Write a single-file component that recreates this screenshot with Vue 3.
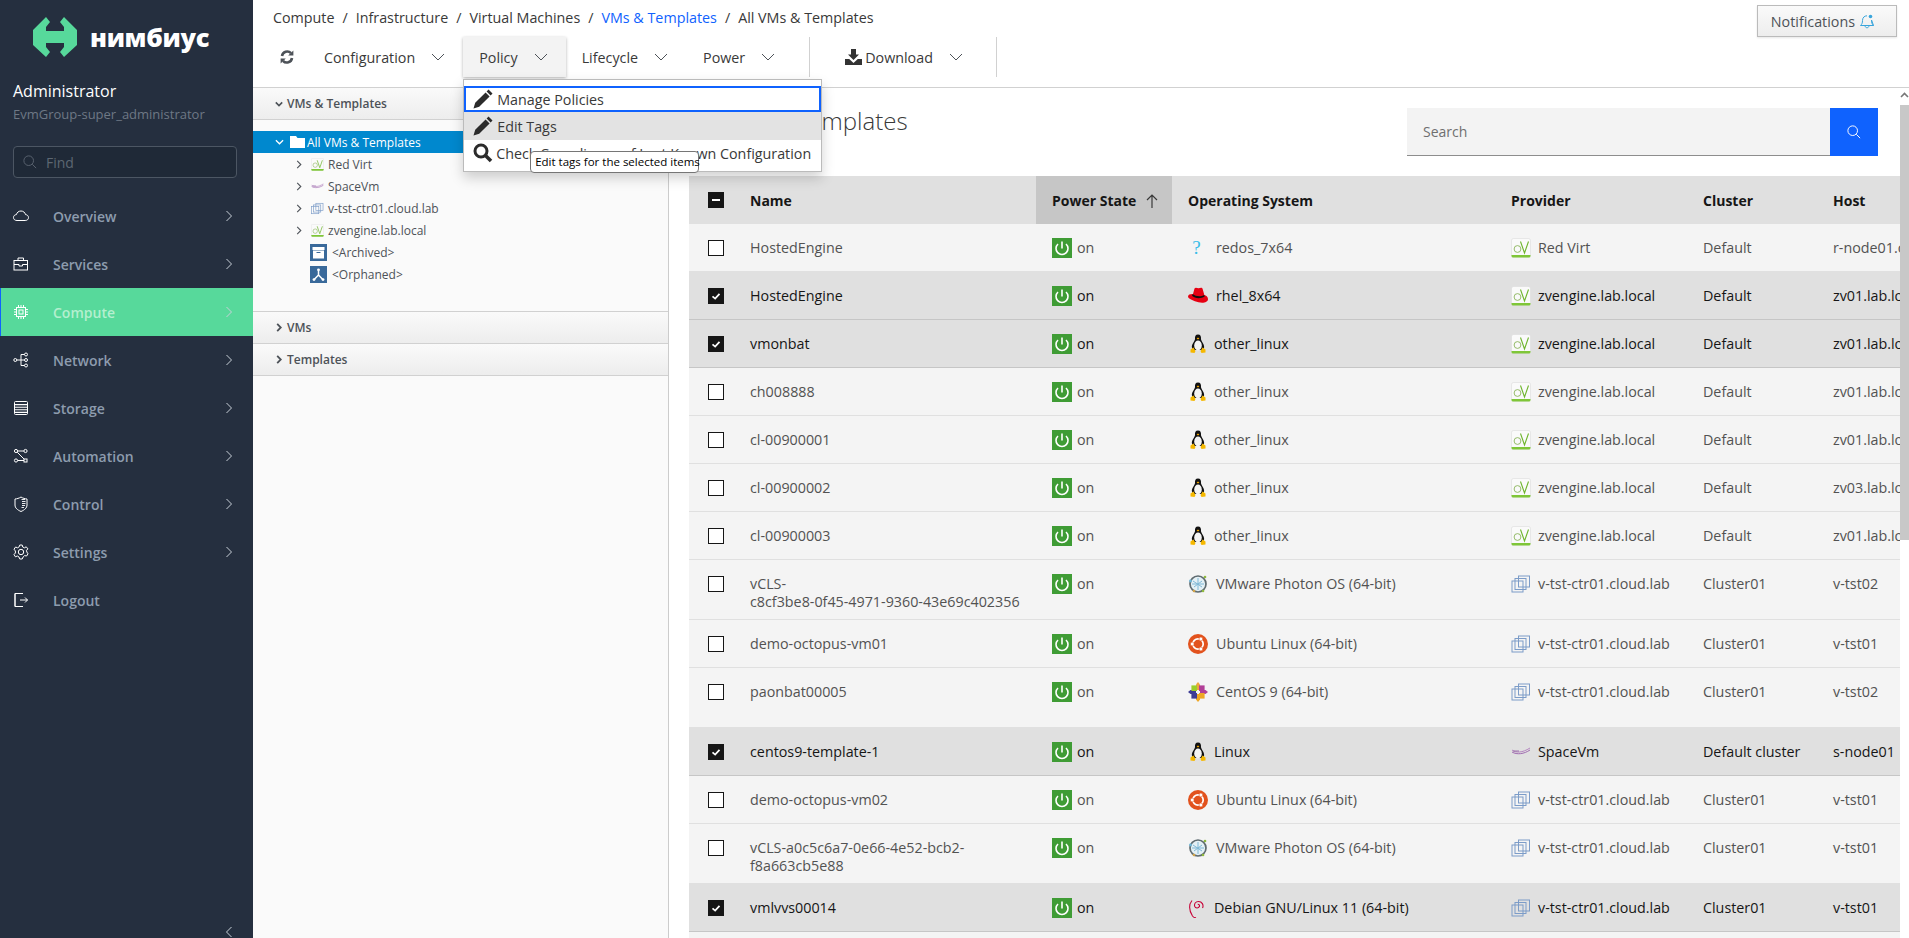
<template>
  <div class="app">
    <aside class="sidebar">
      <div class="logo">
        <svg class="logo-mark" viewBox="33 17 44 40"><path d="M46 17 L50 22 L46 27 V31 H64 V27 L60 22 L64 17 L77 30 V45 L64 57 L60 52 L64 47 V43 H46 V47 L50 52 L46 57 L33 45 V30 Z" fill="#57d99b"/></svg>
        <span class="logo-text">нимбиус</span>
      </div>
      <div class="user">
        <div class="user-name">Administrator</div>
        <div class="user-group">EvmGroup-super_administrator</div>
      </div>
      <div class="find">
        <svg class="find-icon" viewBox="0 0 16 16" fill="none" stroke="#59636f" stroke-width="1.1"><circle cx="6.5" cy="6.5" r="5.5"/><path d="M10.6 10.6 L15 15"/></svg>
        <span>Find</span>
      </div>
      <nav class="nav">
        <div v-for="item in navItems" :key="item.label" class="nav-item" :class="{ active: item.active }">
          <svg class="nav-icon" viewBox="0 0 16 16" fill="none" stroke="#fff" stroke-width="1" v-html="navIcons[item.icon]"></svg>
          <span class="nav-label">{{ item.label }}</span>
          <svg v-if="item.arrow" class="nav-arrow" viewBox="0 0 6 12" fill="none" stroke="currentColor" stroke-width="1"><path d="M0.5 1 L5.5 6 L0.5 11"/></svg>
        </div>
      </nav>
      <div class="collapse-row">
        <svg class="nav-arrow" viewBox="0 0 6 12" fill="none" stroke="#c8d0d8" stroke-width="1"><path d="M5.5 1 L0.5 6 L5.5 11"/></svg>
      </div>
    </aside>

    <main class="main">
      <div class="topbar">
        <div class="crumbs">
          <template v-for="(c, i) in crumbs" :key="c.text">
            <span v-if="i" class="crumb-sep">/</span>
            <span :class="{ 'crumb-link': c.link }">{{ c.text }}</span>
          </template>
        </div>
        <button class="notify">
          Notifications
          <svg class="bell" viewBox="0 0 16 16" fill="none" stroke="#39a5dc" stroke-width="1"><path d="M1.5 12.5 C3 11 3.5 10 3.5 7.5 C3.5 4.5 5.5 2.8 8 2.8 M12.5 7 C12.6 10 13 11 14.5 12.5 Z M1.5 12.5 H14.5 M6 12.5 C6 15.5 10 15.5 10 12.5"/><circle cx="11.5" cy="3.5" r="1.8" fill="#39a5dc" stroke="none"/></svg>
        </button>
      </div>

      <div class="toolbar">
        <svg class="refresh" viewBox="0 0 14 14" fill="none" stroke="#4d5258" stroke-width="2.6"><path d="M2 6 A5.2 5.2 0 0 1 11 3.2"/><path d="M12 8 A5.2 5.2 0 0 1 3 10.8"/><path d="M13.4 0.4 V5.6 H8.2 Z" fill="#4d5258" stroke="none"/><path d="M0.6 13.6 V8.4 H5.8 Z" fill="#4d5258" stroke="none"/></svg>
        <div class="tool-btn">
          Configuration
          <svg class="chev" viewBox="0 0 14 8" fill="none" stroke="#4d5258" stroke-width="1"><path d="M1 1 L7 7 L13 1"/></svg>
        </div>
        <div class="tool-wrap">
          <div class="tool-btn open">
            Policy
            <svg class="chev" viewBox="0 0 14 8" fill="none" stroke="#4d5258" stroke-width="1"><path d="M1 1 L7 7 L13 1"/></svg>
          </div>
          <div class="dropdown">
            <div class="dd-item focused">
              <svg class="dd-icon" viewBox="0 0 20 20" v-html="pencil"></svg>
              <span>Manage Policies</span>
            </div>
            <div class="dd-item hovered">
              <svg class="dd-icon" viewBox="0 0 20 20" v-html="pencil"></svg>
              <span>Edit Tags</span>
            </div>
            <div class="dd-item last">
              <svg class="dd-icon search-ic" viewBox="0 0 20 20" fill="none" stroke="#2b2b2b" stroke-width="3"><circle cx="8" cy="8" r="6"/><path d="M12.5 12.5 L18 18" stroke-width="3.6"/></svg>
              <span>Check Compliance of Last Known Configuration</span>
            </div>
            <div class="tooltip">Edit tags for the selected items</div>
          </div>
        </div>
        <div class="tool-btn">
          Lifecycle
          <svg class="chev" viewBox="0 0 14 8" fill="none" stroke="#4d5258" stroke-width="1"><path d="M1 1 L7 7 L13 1"/></svg>
        </div>
        <div class="tool-btn power-btn">
          Power
          <svg class="chev" viewBox="0 0 14 8" fill="none" stroke="#4d5258" stroke-width="1"><path d="M1 1 L7 7 L13 1"/></svg>
        </div>
        <div class="tool-sep"></div>
        <div class="download">
          <svg class="dl-icon" viewBox="0 0 17 16" fill="#333"><path d="M6 0 H11 V5.5 H14 L8.5 11 L3 5.5 H6 Z"/><path d="M0 10 H4.2 L8.5 14 L12.8 10 H17 V16 H0 Z"/></svg>
          <span class="dl-text">Download</span>
          <svg class="chev" viewBox="0 0 14 8" fill="none" stroke="#4d5258" stroke-width="1"><path d="M1 1 L7 7 L13 1"/></svg>
        </div>
        <div class="tool-sep"></div>
      </div>

      <div class="body">
        <section class="tree-panel">
          <div class="acc-head">
            <svg class="acc-chev" viewBox="0 0 10 6" fill="none" stroke="#4d5258" stroke-width="2"><path d="M1 1 L5 5 L9 1"/></svg>
            VMs &amp; Templates
          </div>
          <div class="tree">
            <div class="tree-row selected">
              <svg class="tree-chev-open" viewBox="0 0 10 6" fill="none" stroke="#fff" stroke-width="1.4"><path d="M1 1 L5 5 L9 1"/></svg>
              <svg class="folder" viewBox="0 0 15 12" fill="#fff"><path d="M0 0 H6 L7.5 2 H15 V12 H0 Z"/></svg>
              <span>All VMs &amp; Templates</span>
            </div>
            <div v-for="node in treeNodes" :key="node.label" class="tree-row child">
              <svg class="tree-chev" viewBox="0 0 6 10" fill="none" stroke="#4d5258" stroke-width="1.2"><path d="M1 1 L5 5 L1 9"/></svg>
              <svg class="tree-icon" viewBox="0 0 20 20" v-html="logos[node.icon]"></svg>
              <span>{{ node.label }}</span>
            </div>
            <div class="tree-row special">
              <svg class="special-icon" viewBox="0 0 17 17"><rect width="17" height="17" fill="#39699a"/><rect x="2.5" y="3" width="12" height="3" fill="#fff"/><rect x="3" y="6.5" width="11" height="8" fill="#fff"/><rect x="6.5" y="8" width="4" height="1" fill="#39699a"/></svg>
              <span>&lt;Archived&gt;</span>
            </div>
            <div class="tree-row special">
              <svg class="special-icon" viewBox="0 0 17 17"><rect width="17" height="17" fill="#39699a"/><path d="M8.5 4 V9 L4.2 13.5 M8.5 9 L12.8 13.5" fill="none" stroke="#fff" stroke-width="1.5"/><circle cx="8.5" cy="3.8" r="1.4" fill="#fff"/><circle cx="4" cy="13.6" r="1.4" fill="#fff"/><circle cx="13" cy="13.6" r="1.4" fill="#fff"/></svg>
              <span>&lt;Orphaned&gt;</span>
            </div>
          </div>
          <div class="acc-head closed">
            <svg class="acc-chev-r" viewBox="0 0 6 10" fill="none" stroke="#4d5258" stroke-width="2"><path d="M1 1 L5 5 L1 9"/></svg>
            VMs
          </div>
          <div class="acc-head closed">
            <svg class="acc-chev-r" viewBox="0 0 6 10" fill="none" stroke="#4d5258" stroke-width="2"><path d="M1 1 L5 5 L1 9"/></svg>
            Templates
          </div>
        </section>

        <section class="content">
          <div class="content-head">
            <h1 class="title">All VMs &amp; Templates</h1>
            <div class="search">
              <div class="search-input">Search</div>
              <button class="search-btn">
                <svg viewBox="0 0 16 16" fill="none" stroke="#fff" stroke-width="1.1"><circle cx="6.5" cy="6.5" r="5.5"/><path d="M10.6 10.6 L15 15"/></svg>
              </button>
            </div>
          </div>
          <table class="grid">
            <colgroup>
              <col style="width: 47px" />
              <col style="width: 300px" />
              <col style="width: 136px" />
              <col style="width: 325px" />
              <col style="width: 192px" />
              <col style="width: 130px" />
              <col />
            </colgroup>
            <thead>
              <tr>
                <th class="check-cell"><span class="box filled"><i class="minus"></i></span></th>
                <th>Name</th>
                <th class="sorted wide-pad">Power State<svg class="sort-arrow" viewBox="0 0 12 14" fill="none" stroke="#393939" stroke-width="1.2"><path d="M6 14 V1 M1 6 L6 1 L11 6"/></svg></th>
                <th class="wide-pad">Operating System</th>
                <th>Provider</th>
                <th>Cluster</th>
                <th>Host</th>
              </tr>
            </thead>
            <tbody>
              <tr v-for="(row, i) in rows" :key="i" :class="{ sel: row.sel, tall: row.tall }">
                <td class="check-cell">
                  <span class="box" :class="{ filled: row.sel }">
                    <svg v-if="row.sel" viewBox="0 0 16 16" fill="none" stroke="#fff" stroke-width="2"><path d="M4 8.5 L7 11 L12 5.5"/></svg>
                  </span>
                </td>
                <td class="name-cell">{{ row.name }}</td>
                <td class="wide-pad">
                  <span class="with-icon">
                    <svg class="power" viewBox="0 0 20 20"><rect width="20" height="20" fill="#3f9c35"/><path d="M6 6 A6 6 0 1 0 14 6" fill="none" stroke="#fff" stroke-width="1.6"/><path d="M10 3.5 V10.5" stroke="#fff" stroke-width="1.6"/></svg>
                    <span>on</span>
                  </span>
                </td>
                <td class="wide-pad">
                  <span class="with-icon os">
                    <svg class="os-icon" viewBox="0 0 20 20" v-html="logos[row.osIcon]"></svg>
                    <span :class="{ nudge: row.osIcon === 'tux' || row.osIcon === 'debian' }">{{ row.os }}</span>
                  </span>
                </td>
                <td>
                  <span class="with-icon prov">
                    <svg class="os-icon" viewBox="0 0 20 20" v-html="logos[row.provIcon]"></svg>
                    <span>{{ row.provider }}</span>
                  </span>
                </td>
                <td>{{ row.cluster }}</td>
                <td class="host-cell">{{ row.host }}</td>
              </tr>
            </tbody>
          </table>
        </section>

        <div class="scrollbar">
          <svg class="scroll-up" viewBox="0 0 9 6" fill="none" stroke="#777" stroke-width="1.6"><path d="M1 5 L4.5 1.5 L8 5"/></svg>
          <div class="scroll-thumb"></div>
        </div>
      </div>
    </main>
  </div>
</template>

<script setup>
const navItems = [
  { label: 'Overview', icon: 'cloud', arrow: true },
  { label: 'Services', icon: 'case', arrow: true },
  { label: 'Compute', icon: 'chip', arrow: true, active: true },
  { label: 'Network', icon: 'net', arrow: true },
  { label: 'Storage', icon: 'storage', arrow: true },
  { label: 'Automation', icon: 'auto', arrow: true },
  { label: 'Control', icon: 'shield', arrow: true },
  { label: 'Settings', icon: 'gear', arrow: true },
  { label: 'Logout', icon: 'logout', arrow: false },
]

const navIcons = {
  cloud: '<path d="M4 12.5 C1.5 12.5 0.5 11 0.5 9.5 C0.5 7.8 1.8 6.7 3.4 6.6 C3.9 4.4 5.7 3 8 3 C10.3 3 12 4.5 12.5 6.6 C14.2 6.7 15.5 7.9 15.5 9.6 C15.5 11.2 14.3 12.5 12.2 12.5 Z"/>',
  case: '<rect x="1" y="4.5" width="13.5" height="9.5"/><path d="M5 4.5 V2 H10.5 V4.5 M1 8.5 H6 V10 H9.5 V8.5 H14.5"/>',
  chip: '<rect x="3.5" y="3.5" width="9" height="9"/><rect x="6" y="6" width="4" height="4"/><path d="M5.5 1 V3.5 M8 1 V3.5 M10.5 1 V3.5 M5.5 12.5 V15 M8 12.5 V15 M10.5 12.5 V15 M1 5.5 H3.5 M1 8 H3.5 M1 10.5 H3.5 M12.5 5.5 H15 M12.5 8 H15 M12.5 10.5 H15"/>',
  net: '<circle cx="2.3" cy="8" r="1.5"/><circle cx="13" cy="2.5" r="1.5"/><circle cx="13" cy="8" r="1.5"/><circle cx="13" cy="13.5" r="1.5"/><path d="M3.8 8 H11.5 M8 8 V2.5 H11.5 M8 8 V13.5 H11.5"/>',
  storage: '<rect x="1.5" y="1.5" width="13" height="13" rx="1"/><path d="M1.5 4.6 H14.5 M1.5 7.2 H14.5 M1.5 9.8 H14.5 M1.5 12.4 H14.5" stroke-width="1.1"/>',
  auto: '<circle cx="3" cy="3" r="1.6"/><circle cx="12.5" cy="3" r="1.6"/><circle cx="3" cy="12.5" r="1.6"/><rect x="11" y="11" width="3" height="3"/><path d="M4.6 3 H10.9 M4.2 4.2 L11.2 11.2 M4.6 12.5 H11"/>',
  shield: '<path d="M8 1 C10 2.3 12 2.8 14 3 V9 C14 12 11.5 14 8 15.5 C4.5 14 2 12 2 9 V3 C4 2.8 6 2.3 8 1 Z"/><path d="M8.5 3.5 H12 M9 5.5 H12.5 M9 7.5 H12.5 M9 9.5 H12 M8.5 11.5 H11" stroke-width="0.9"/>',
  gear: '<circle cx="8" cy="8" r="2.7"/><path d="M6.8 1 H9.2 L9.7 3 L11.5 3.8 L13.2 2.8 L14.9 4.9 L13.5 6.3 L13.8 8 L15 9.8 L13.6 12 L11.6 11.6 L10.1 13 L9.2 15 H6.8 L6 13 L4.3 12 L2.4 12.8 L1 10.6 L2.4 9 V7 L1 5.2 L2.6 3 L4.6 3.8 L6.2 2.8 Z"/>',
  logout: '<path d="M10 1.5 H2 V14.5 H10 M2 1.5 V14.5 M7 8 H14.5 M12 5.5 L14.5 8 L12 10.5"/>',
}

const crumbs = [
  { text: 'Compute' },
  { text: 'Infrastructure' },
  { text: 'Virtual Machines' },
  { text: 'VMs & Templates', link: true },
  { text: 'All VMs & Templates' },
]

const pencil = '<path fill="#2b2b2b" d="M15.5 0.5 L19.5 4.5 L17.6 6.4 L13.6 2.4 Z M12.6 3.4 L16.6 7.4 L6.2 17.8 L0.5 19.5 L2.2 13.8 Z"/>'

const logos = {
  ovirt:
    '<rect x="0.5" y="0.5" width="19" height="18.5" rx="2" fill="#fafafa" stroke="#dcdcdc" stroke-width="0.6"/><path d="M0.5 17 H19.5 V18 Q19.5 19.5 18 19.5 H2 Q0.5 19.5 0.5 18 Z" fill="#7fc638"/><circle cx="6.5" cy="11" r="3.4" fill="none" stroke="#8ab45a" stroke-width="0.9"/><path d="M9.5 3.5 L13.5 15 L17.5 3.5" fill="none" stroke="#6fb52d" stroke-width="1.1"/>',
  space:
    '<path d="M1 8 C5 11 11 11 19 6" fill="none" stroke="#b585c0" stroke-width="1"/><path d="M1 10 C6 13 13 12 19 8" fill="none" stroke="#a06cb0" stroke-width="1"/><path d="M2 9 H8" stroke="#8d5aa0" stroke-width="0.8"/>',
  vmware:
    '<g fill="none" stroke="#7c9cc8" stroke-width="1"><rect x="1" y="7" width="11" height="11"/><rect x="4" y="4.5" width="11" height="11"/><rect x="7.5" y="2" width="11" height="11"/></g>',
  unknown:
    '<text x="8.5" y="16" text-anchor="middle" font-family="Liberation Serif, serif" font-size="19" fill="#39bde8">?</text>',
  redhat:
    '<path d="M5 8 L6.5 2.5 C7.5 1 9 2 10.5 2.3 C12.5 2 14 1 14.8 3.5 L16.3 9 C18 9.5 20 10.5 20 13 C20 16.5 15 17.5 10.5 16.3 C6 15 0 13 0 10.5 C0 8.5 2.5 7.8 5 8 Z" fill="#e60012"/><path d="M4.8 8 C7.5 10.5 13 11 16.3 9 L16.7 10.5 C12.5 13 7 12.5 4 9.8 Z" fill="#111"/>',
  tux:
    '<path d="M10 0.5 C7.5 0.5 6.8 2.5 7 5 C7 7 4 9.5 3.8 13 L5 16 H15 L16.2 13 C16 9.5 13 7 13 5 C13.2 2.5 12.5 0.5 10 0.5 Z" fill="#111"/><ellipse cx="10" cy="11.5" rx="3.8" ry="5" fill="#f4f4f4"/><path d="M8.6 4.4 L10 3.6 L11.4 4.4 L10 5.6 Z" fill="#f5a800"/><path d="M2.5 15.5 L5.5 13.5 L7.5 17 L6.5 19 L2.5 18.5 Z M17.5 15.5 L14.5 13.5 L12.5 17 L13.5 19 L17.5 18.5 Z" fill="#f5b800"/>',
  ubuntu:
    '<circle cx="10" cy="10" r="10" fill="#e2521d"/><circle cx="10" cy="10" r="5.2" fill="none" stroke="#fff" stroke-width="1.7"/><circle cx="4.2" cy="10" r="1.9" fill="#fff" stroke="#e2521d" stroke-width="0.6"/><circle cx="12.9" cy="5" r="1.9" fill="#fff" stroke="#e2521d" stroke-width="0.6"/><circle cx="12.9" cy="15" r="1.9" fill="#fff" stroke="#e2521d" stroke-width="0.6"/>',
  photon:
    '<circle cx="10" cy="10" r="8" fill="#e4f0f5" stroke="#5f6b70" stroke-width="1.7"/><path d="M5 7 L14 13 M6 13 L14 7 M10 4 V16 M4 10 H16" stroke="#7fb8d6" stroke-width="1"/><circle cx="2.5" cy="7" r="1.4" fill="#6fb7d8"/><circle cx="17" cy="3" r="1.3" fill="#8fb93e"/><circle cx="15" cy="17" r="1.3" fill="#8fb93e"/><circle cx="6" cy="17" r="1.3" fill="#d0a34a"/>',
  centos:
    '<path d="M10 0 L12 2.5 V8 H8 V2.5 Z" fill="#eea53c"/><path d="M20 10 L17.5 12 H12 V8 H17.5 Z" fill="#b13f97"/><path d="M10 20 L8 17.5 V12 H12 V17.5 Z" fill="#efa724"/><path d="M0 10 L2.5 8 H8 V12 H2.5 Z" fill="#3d3c95"/><rect x="3.4" y="3.4" width="5.6" height="5.6" fill="#9ccd2a"/><rect x="11" y="3.4" width="5.6" height="5.6" fill="#b13f97"/><rect x="11" y="11" width="5.6" height="5.6" fill="#efa724"/><rect x="3.4" y="11" width="5.6" height="5.6" fill="#3d3c95"/>',
  debian:
    '<path d="M14.5 10 C16 7 14 3.5 10.5 3.5 C7.5 3.5 6 6 6.7 8.4 C7.4 10.4 10.5 10.5 11.4 8.6 C11.9 7.4 11 6 9.7 6.2 M4 2.5 C1 6 0.5 12 4.5 18 C5.5 19.2 7 20 8 19.5" fill="none" stroke="#c70036" stroke-width="1.1"/>',
}

const treeNodes = [
  { label: 'Red Virt', icon: 'ovirt' },
  { label: 'SpaceVm', icon: 'space' },
  { label: 'v-tst-ctr01.cloud.lab', icon: 'vmware' },
  { label: 'zvengine.lab.local', icon: 'ovirt' },
]

const zv = { provider: 'zvengine.lab.local', provIcon: 'ovirt', cluster: 'Default' }
const vt = { provider: 'v-tst-ctr01.cloud.lab', provIcon: 'vmware', cluster: 'Cluster01' }
const photon = { os: 'VMware Photon OS (64-bit)', osIcon: 'photon' }
const ubuntu = { os: 'Ubuntu Linux (64-bit)', osIcon: 'ubuntu' }
const linux = { os: 'other_linux', osIcon: 'tux' }

const rows = [
  { name: 'HostedEngine', os: 'redos_7x64', osIcon: 'unknown', provider: 'Red Virt', provIcon: 'ovirt', cluster: 'Default', host: 'r-node01.cloud.lab' },
  { name: 'HostedEngine', sel: true, os: 'rhel_8x64', osIcon: 'redhat', ...zv, host: 'zv01.lab.local' },
  { name: 'vmonbat', sel: true, ...linux, ...zv, host: 'zv01.lab.local' },
  { name: 'ch008888', ...linux, ...zv, host: 'zv01.lab.local' },
  { name: 'cl-00900001', ...linux, ...zv, host: 'zv01.lab.local' },
  { name: 'cl-00900002', ...linux, ...zv, host: 'zv03.lab.local' },
  { name: 'cl-00900003', ...linux, ...zv, host: 'zv01.lab.local' },
  { name: 'vCLS-\nc8cf3be8-0f45-4971-9360-43e69c402356', tall: true, ...photon, ...vt, host: 'v-tst02' },
  { name: 'demo-octopus-vm01', ...ubuntu, ...vt, host: 'v-tst01' },
  { name: 'paonbat00005', tall: true, os: 'CentOS 9 (64-bit)', osIcon: 'centos', ...vt, host: 'v-tst02' },
  { name: 'centos9-template-1', sel: true, os: 'Linux', osIcon: 'tux', provider: 'SpaceVm', provIcon: 'space', cluster: 'Default cluster', host: 's-node01' },
  { name: 'demo-octopus-vm02', ...ubuntu, ...vt, host: 'v-tst01' },
  { name: 'vCLS-a0c5c6a7-0e66-4e52-bcb2-\nf8a663cb5e88', tall: true, ...photon, ...vt, host: 'v-tst01' },
  { name: 'vmlvvs00014', sel: true, os: 'Debian GNU/Linux 11 (64-bit)', osIcon: 'debian', ...vt, host: 'v-tst01' },
  { name: 'vmlvvs00015', ...linux, ...vt, host: 'v-tst01' },
]
</script>

<style>
html,
body {
  margin: 0;
  height: 100%;
  overflow: hidden;
  background: #fff;
}
</style>

<style scoped>
.app {
  display: flex;
  height: 938px;
  overflow: hidden;
  font-family: 'Open Sans', 'Noto Sans', sans-serif;
  font-size: 14px;
  color: #393939;
}

/* sidebar */
.sidebar {
  width: 253px;
  flex: none;
  display: flex;
  flex-direction: column;
  background: #252f3f;
  color: #fff;
}

.logo {
  display: flex;
  align-items: center;
  height: 40px;
  margin-top: 17px;
  padding-left: 33px;
}

.logo-mark {
  width: 44px;
  height: 40px;
}

.logo-text {
  margin-left: 13px;
  font-family: 'Open Sans', sans-serif;
  font-weight: 800;
  font-size: 25.5px;
  line-height: 40px;
  letter-spacing: -0.3px;
}

.user {
  padding: 23px 13px 0;
}

.user-name {
  font-size: 16px;
  line-height: 22px;
}

.user-group {
  margin-top: 3px;
  font-size: 13px;
  line-height: 18px;
  color: #6e7885;
}

.find {
  display: flex;
  align-items: center;
  gap: 9px;
  height: 30px;
  margin: 23px 16px 0 13px;
  padding-left: 9px;
  border: 1px solid #4c5663;
  border-radius: 4px;
  background: #1f2937;
  color: #5d6772;
}

.find-icon {
  width: 14px;
  height: 14px;
}

.nav {
  margin-top: 14px;
}

.nav-item {
  display: flex;
  align-items: center;
  height: 48px;
  padding-left: 13px;
  color: #8d9cae;
  font-weight: 600;
}

.nav-item.active {
  background: #57d99b;
  color: #b4efcf;
  box-shadow: inset 1px 0 0 #0f62fe;
}

.nav-icon {
  width: 16px;
  height: 16px;
  flex: none;
}

.nav-label {
  margin-left: 24px;
  flex: 1;
}

.nav-arrow {
  width: 6px;
  height: 12px;
  margin-right: 21px;
  color: #c8d0d8;
}

.collapse-row {
  margin-top: auto;
  height: 12px;
  display: flex;
  justify-content: flex-end;
}

/* top */
.main {
  flex: 1;
  min-width: 0;
  display: flex;
  flex-direction: column;
  font-size: 14.3px;
}

.topbar {
  display: flex;
  justify-content: space-between;
  height: 37px;
  padding-left: 20px;
}

.crumbs {
  display: flex;
  align-items: center;
  height: 34px;
  color: #393939;
}

.crumb-sep {
  margin: 0 8px;
}

.crumb-link {
  color: #0f62fe;
}

.notify {
  display: flex;
  align-items: center;
  gap: 4px;
  height: 32px;
  margin: 5px 12px 0 0;
  padding: 0 21px 0 13px;
  border: 1px solid #bbb;
  background: linear-gradient(#fafafa, #ededed);
  box-shadow: 0 1px 2px rgba(0, 0, 0, 0.1);
  color: #4d5258;
  font: inherit;
}

.bell {
  width: 16px;
  height: 16px;
}

.toolbar {
  display: flex;
  align-items: center;
  height: 50px;
  flex: none;
  box-sizing: content-box;
  border-bottom: 1px solid #d1d1d1;
}

.refresh {
  width: 14px;
  height: 14px;
  margin: 0 14px 10px 27px;
}

.tool-wrap {
  position: relative;
}

.tool-btn {
  display: flex;
  align-items: center;
  gap: 16px;
  height: 40px;
  margin-bottom: 10px;
  padding: 0 18px 0 16px;
  color: #393939;
}

.tool-btn.open {
  background: #f3f3f3;
  box-shadow: 0 1px 3px rgba(0, 0, 0, 0.3);
}

.power-btn {
  margin-left: 1px;
}

.chev {
  width: 14px;
  height: 8px;
}

.tool-sep {
  width: 1px;
  height: 40px;
  margin: 0 0 10px 16px;
  background: #d1d1d1;
}

.download {
  display: flex;
  align-items: center;
  height: 40px;
  margin-bottom: 10px;
  padding-left: 35px;
  margin-right: 17px;
}

.dl-icon {
  width: 17px;
  height: 16px;
}

.dl-text {
  margin: 0 16px 0 3px;
}

/* policy dropdown */
.dropdown {
  position: absolute;
  top: 42px;
  left: 0;
  z-index: 10;
  width: 357px;
  padding-top: 6px;
  border: 1px solid #bbb;
  background: #fff;
  box-shadow: 0 6px 12px rgba(0, 0, 0, 0.18);
}

.dd-item {
  display: flex;
  align-items: center;
  height: 28px;
  padding-left: 9px;
  white-space: nowrap;
  color: #393939;
}

.dd-item.focused {
  height: 26px;
  padding-left: 7px;
  border: 2px solid #0f62fe;
  box-sizing: border-box;
  margin-bottom: 0;
}

.dd-item.hovered {
  background: #e3e3e3;
}

.dd-item.last {
  box-sizing: border-box;
  height: 31px;
  padding-bottom: 5px;
}

.dd-icon {
  width: 20px;
  height: 20px;
  margin-right: 4px;
  flex: none;
}

.search-ic {
  margin-right: 3px;
}

.tooltip {
  position: absolute;
  top: 71px;
  left: 66px;
  box-sizing: border-box;
  width: 169px;
  height: 22px;
  padding-left: 4px;
  border: 1px solid #767676;
  border-radius: 4px;
  background: #fff;
  color: #000;
  font-size: 11.5px;
  line-height: 20px;
  white-space: nowrap;
}

/* tree panel */
.body {
  flex: 1;
  min-height: 0;
  display: flex;
}

.tree-panel {
  width: 415px;
  flex: none;
  border-right: 1px solid #ccc;
  background: #fafafa;
  font-size: 12px;
}

.acc-head {
  display: flex;
  align-items: center;
  box-sizing: border-box;
  height: 32px;
  padding-left: 22px;
  border-bottom: 1px solid #d1d1d1;
  background: linear-gradient(#fafafa, #ededed);
  color: #4d5258;
  font-weight: 600;
}

.acc-head.closed {
  padding-left: 23px;
}

.acc-chev {
  width: 8px;
  height: 6px;
  margin-right: 4px;
}

.acc-chev-r {
  width: 6px;
  height: 9px;
  margin-right: 5px;
}

.tree {
  box-sizing: border-box;
  height: 192px;
  padding-top: 11px;
  border-bottom: 1px solid #d1d1d1;
}

.tree-row {
  display: flex;
  align-items: center;
  height: 22px;
  color: #4d5258;
  font-size: 12px;
}

.tree-row.selected {
  background: #0088ce;
  color: #fff;
  padding-left: 22px;
}

.tree-chev-open {
  width: 9px;
  height: 6px;
  margin-right: 6px;
}

.folder {
  width: 15px;
  height: 12px;
  margin-right: 2px;
}

.tree-row.child {
  padding-left: 43px;
}

.tree-chev {
  width: 6px;
  height: 9px;
  margin-right: 9px;
}

.tree-icon {
  width: 13px;
  height: 13px;
  margin-right: 4px;
}

.tree-row.special {
  padding-left: 57px;
}

.special-icon {
  width: 17px;
  height: 17px;
  margin-right: 5px;
}

/* right side */
.content {
  flex: 1;
  min-width: 0;
  overflow: hidden;
  padding-left: 20px;
  font-size: 14px;
}

.content-head {
  display: flex;
  justify-content: space-between;
  align-items: flex-start;
  height: 88px;
  padding-right: 22px;
}

.title {
  margin: 16px 0 0;
  font-size: 24px;
  line-height: 34px;
  font-weight: 300;
  color: #393939;
}

.search {
  display: flex;
  margin-top: 20px;
}

.search-input {
  box-sizing: border-box;
  width: 423px;
  height: 48px;
  padding: 0 16px;
  background: #f3f3f3;
  border-bottom: 1px solid #8d8d8d;
  color: #6f6f6f;
  line-height: 47px;
}

.search-btn {
  width: 48px;
  height: 48px;
  padding: 0;
  border: none;
  background: #0f62fe;
  display: flex;
  align-items: center;
  justify-content: center;
}

.search-btn svg {
  width: 14px;
  height: 14px;
}

.grid {
  width: 1211px;
  table-layout: fixed;
  border-collapse: separate;
  border-spacing: 0;
}

.grid th {
  height: 48px;
  padding: 0 14px;
  background: #e0e0e0;
  color: #161616;
  font-weight: 700;
  text-align: left;
  white-space: nowrap;
}

.grid th.sorted {
  background: #c6c6c6;
}

.grid .wide-pad {
  padding-left: 16px;
}

.sort-arrow {
  width: 12px;
  height: 14px;
  margin-left: 10px;
  vertical-align: -2px;
}

.grid td {
  box-sizing: border-box;
  height: 48px;
  padding: 15px 14px 0;
  vertical-align: top;
  font-size: 14.3px;
  line-height: 18px;
  background: #f4f4f4;
  border-bottom: 1px solid #e0e0e0;
  color: #525252;
  overflow: hidden;
  white-space: nowrap;
}

.grid td.wide-pad {
  padding-left: 16px;
}

.grid tr.tall td {
  height: 60px;
}

.grid tr.sel td {
  background: #e0e0e0;
  border-bottom-color: #c6c6c6;
  color: #161616;
}

.check-cell {
  padding: 0 0 0 19px !important;
}

.grid td.check-cell {
  padding-top: 16px !important;
}

.box {
  display: block;
  box-sizing: border-box;
  width: 16px;
  height: 16px;
  border: 1px solid #161616;
  background: #fff;
}

.box svg {
  display: block;
  width: 14px;
  height: 14px;
}

.box.filled {
  background: #161616;
}

.minus {
  display: block;
  width: 8px;
  height: 2px;
  margin: 6px auto 0;
  background: #fff;
}

.grid td.name-cell {
  white-space: pre-line;
}

.with-icon {
  display: flex;
  align-items: center;
  gap: 5px;
  height: 18px;
}

.power {
  width: 20px;
  height: 20px;
  flex: none;
}

.os {
  gap: 8px;
}

.os .nudge {
  margin-left: -2px;
}

.prov {
  gap: 7px;
}

.os-icon {
  width: 20px;
  height: 20px;
  flex: none;
}

.scrollbar {
  width: 9px;
  flex: none;
  display: flex;
  flex-direction: column;
  align-items: center;
}

.scroll-up {
  width: 9px;
  height: 6px;
  margin: 4px 0 7px;
}

.scroll-thumb {
  width: 9px;
  height: 435px;
  background: #c8c8c8;
}
</style>
